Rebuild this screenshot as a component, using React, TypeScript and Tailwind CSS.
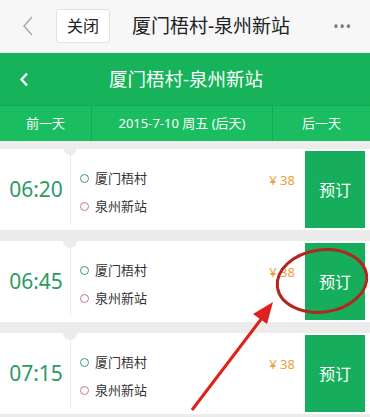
import React from "react";

const trips = [
    {time: "06:20"},
    {time: "06:45"},
    {time: "07:15"},
]

const Trip = ({time, first}: {time: string; first?: boolean}) => {
    return (
        <div className="relative flex h-[81px] bg-white">
            {/* notch on the divider line */}
            <div className={first ? "absolute -top-[6px] left-[64px] w-[12px] h-[12px] rounded-full bg-[#ececec]" : "absolute -top-[7px] left-[63px] w-[14px] h-[14px] rounded-full bg-[#ececec]"}></div>
            <div className="w-[70px] flex items-center justify-center text-[21px] text-[#2d9a63] pl-[2px]">
                {time}
            </div>
            <div className="my-[6px] border-l border-dotted border-[#d8d8d8]"></div>
            <div className="flex flex-col justify-center gap-[9px] pl-[9px] pt-[6px] flex-1">
                <div className="flex items-center gap-[6px] text-[13px] text-[#333]">
                    <span className="w-[9px] h-[9px] rounded-full border border-[#3a9a78]"></span>
                    厦门梧村
                </div>
                <div className="flex items-center gap-[6px] text-[13px] text-[#333]">
                    <span className="w-[9px] h-[9px] rounded-full border border-[#c07a86]"></span>
                    泉州新站
                </div>
            </div>
            <div className="pt-[22px] pr-[10px] text-[13px] text-[#e9a23b]">¥ 38</div>
            <div className="w-[60px] my-[2px] mr-[5px] flex items-center justify-center bg-[#16ad5c] text-white text-[16px]">
                预订
            </div>
        </div>
    )
}

export default function App() {
    return (
        <div className="relative w-[370px] h-[417px] overflow-hidden bg-[#ececec]" style={{fontFamily: '"Noto Sans", "Noto Sans CJK SC", sans-serif'}}>
            <div className="h-[53px] flex items-center bg-[#f7f7f7] border-b border-[#e4e4e4]">
                <svg className="ml-[22px]" width="12" height="20" viewBox="0 0 12 20">
                    <path d="M10 1 L2 10 L10 19" fill="none" stroke="#a8a8a8" strokeWidth="1.4"/>
                </svg>
                <div className="ml-[22px] w-[54px] h-[34px] flex items-center justify-center bg-white border border-[#e2e2e2] rounded-[3px] text-[16px] text-[#222]">
                    关闭
                </div>
                <div className="ml-[22px] text-[19px] text-[#222]">厦门梧村-泉州新站</div>
                <div className="ml-auto mr-[18px] text-[#777] text-[14px] tracking-[1px]">•••</div>
            </div>
            <div className="bg-[#17b35a]">
                <div className="relative h-[52px] flex items-center justify-center">
                    <svg className="absolute left-[19px] top-[19px]" width="10" height="15" viewBox="0 0 10 15">
                        <path d="M8 1.5 L2.5 7.5 L8 13.5" fill="none" stroke="white" strokeWidth="2.4"/>
                    </svg>
                    <div className="text-white text-[18.5px] pl-[2px]">厦门梧村-泉州新站</div>
                </div>
                <div className="h-[36px] flex bg-[#1abd60] border-t border-[#16a955] text-white text-[13px]">
                    <div className="w-[92px] flex items-center justify-center border-r border-[#16a955]">前一天</div>
                    <div className="w-[181px] flex items-center justify-center border-r border-[#16a955]">2015-7-10 周五 (后天)</div>
                    <div className="flex-1 flex items-center justify-center">后一天</div>
                </div>
            </div>
            <div className="pt-[8px] flex flex-col gap-[11px]">
                {trips.map((t, i) => (
                    <Trip key={t.time} time={t.time} first={i == 0}/>
                ))}
            </div>
            {/* red annotation drawn over the screenshot */}
            <svg className="absolute left-0 top-0" width="370" height="417" viewBox="0 0 370 417">
                <ellipse cx="322" cy="281" rx="45" ry="31" fill="none" stroke="#b3261e" strokeWidth="3" transform="rotate(-8 322 281)"/>
                <path d="M192 410 L262 318" stroke="#e0201c" strokeWidth="3" fill="none"/>
                <path d="M273 302 L253 314 L267 324 Z" fill="#e0201c"/>
            </svg>
        </div>
    )
}
